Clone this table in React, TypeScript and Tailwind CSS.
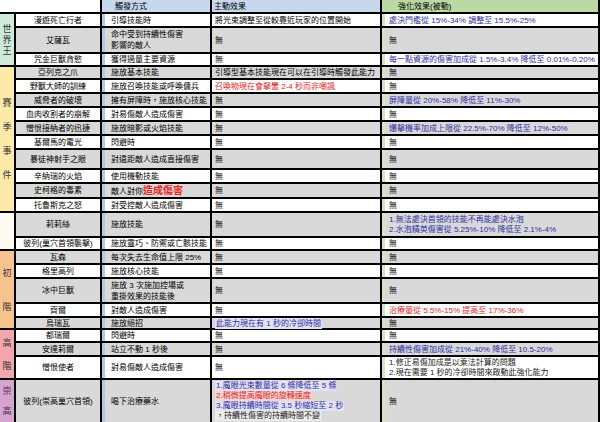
import React from "react";

type Row = {
  name: string;
  trigger: React.ReactNode;
  active?: React.ReactNode;
  passive?: React.ReactNode;
};

const BLUE = "text-[#2f2f9f]";
const RED = "text-[#e02828]";

const rows: Row[] = [
  {
    name: "漫遊死亡行者",
    trigger: "引導技能時",
    active: "將光束調整至從較靠近玩家的位置開始",
    passive: <span className={BLUE}>處決門檻從 15%-34% 調整至 15.5%-25%</span>,
  },
  {
    name: "艾薩瓦",
    trigger: (
      <span>
        命中受到持續性傷害
        <br />
        影響的敵人
      </span>
    ),
  },
  {
    name: "咒金巨獸貪慾",
    trigger: "獲得過量主要資源",
    passive: <span className={BLUE}>每一點資源的傷害加成從 1.5%-3.4% 降低至 0.01%-0.20%</span>,
  },
  { name: "亞列克之爪", trigger: "施放基本技能", active: "引導型基本技能現在可以在引導時觸發此能力" },
  {
    name: "野獸大師的訓練",
    trigger: "施放召喚技能或呼喚傭兵",
    active: <span className={RED}>召喚物現在會擊暈 2-4 秒而非嘲諷</span>,
  },
  {
    name: "威脅者的破壞",
    trigger: "擁有屏障時，施放核心技能",
    passive: <span className={BLUE}>屏障量從 20%-58% 降低至 11%-30%</span>,
  },
  { name: "血肉收割者的崩解", trigger: "對易傷敵人造成傷害" },
  {
    name: "憎恨接納者的迅捷",
    trigger: "施放暗影或火焰技能",
    passive: <span className={BLUE}>爆擊機率加成上限從 22.5%-70% 降低至 12%-50%</span>,
  },
  { name: "基爾馬的電光", trigger: "閃避時" },
  { name: "暴徒神射手之眼", trigger: "對遠距敵人造成直接傷害" },
  { name: "辛納瑞的火焰", trigger: "使用機動技能" },
  {
    name: "史柯格的毒素",
    trigger: (
      <span>
        敵人對你<span className="text-[10px] font-bold text-[#ee1c1c]">造成傷害</span>
      </span>
    ),
  },
  { name: "托魯斯克之怒", trigger: "對受控敵人造成傷害" },
  {
    name: "莉莉絲",
    trigger: "施放技能",
    passive: (
      <span className={`${BLUE} leading-[10px]`}>
        1.無法處決首領的技能不再能處決水泡
        <br />
        2.水泡精英傷害從 5.25%-10% 降低至 2.1%-4%
      </span>
    ),
  },
  { name: "彼列(巢穴首領襲擊)", trigger: "施放靈巧、防禦或亡骸技能" },
  { name: "瓦森", trigger: "每次失去生命值上限 25%" },
  { name: "格里高列", trigger: "施放核心技能" },
  {
    name: "冰中巨獸",
    trigger: (
      <span>
        施放 3 次施加控場或
        <br />
        重掛效果的技能後
      </span>
    ),
  },
  {
    name: "齊爾",
    trigger: "對敵人造成傷害",
    passive: <span className={RED}>治療量從 5.5%-15% 提高至 17%-36%</span>,
  },
  {
    name: "烏瑞瓦",
    trigger: "施放絕招",
    active: <span className={`${BLUE} bg-[#e2e2f4] px-[1px]`}>此能力現在有 1 秒的冷卻時間</span>,
  },
  { name: "都瑞爾", trigger: "閃避時" },
  {
    name: "安達莉爾",
    trigger: "站立不動 1 秒後",
    passive: <span className={BLUE}>持續性傷害加成從 21%-40% 降低至 10.5-20%</span>,
  },
  {
    name: "憎恨使者",
    trigger: "對易傷敵人造成傷害",
    passive: (
      <span className="leading-[10px] text-[#222]">
        1.修正易傷加成是以乘法計算的問題
        <br />
        2.現在需要 1 秒的冷卻時間來啟動此強化能力
      </span>
    ),
  },
  {
    name: "彼列(崇高巢穴首領)",
    trigger: "喝下治療藥水",
    active: (
      <div className="flex flex-col items-start leading-[10px]">
        <span className={`${BLUE} bg-[#e2e2f4] px-[1px]`}>1.魔眼光束數量從 6 條降低至 5 條</span>
        <span className={`${RED} bg-[#f6d4d4] px-[1px]`}>2.稍微提高魔眼的旋轉速度</span>
        <span className={`${BLUE} bg-[#e2e2f4] px-[1px]`}>3.魔眼持續時間從 3.5 秒縮短至 2 秒</span>
        <span className="bg-[#ececec] px-[1px] text-[#222]">，持續性傷害的持續時間不變</span>
      </div>
    ),
  },
];

function Category({ pos, bg, chars, gap }: { pos: string; bg: string; chars: string[]; gap: string }) {
  return (
    <div className={`col-start-1 ${pos} ${bg} flex flex-col items-center justify-center ${gap}`}>
      {chars.map((c, i) => (
        <span key={i} className="text-[9px] leading-[10px] text-[#333]">
          {c}
        </span>
      ))}
    </div>
  );
}

export default function App() {
  return (
    <div
      className="h-[422px] w-[600px] overflow-hidden bg-white"
      style={{ fontFamily: '"Liberation Sans", "Noto Sans CJK TC", sans-serif' }}
    >
      <div className="grid grid-cols-[14px_84px_108px_168px_1fr] grid-rows-[12px_12px_24px_11px_11px_12px_12px_12px_12px_12px_18px_12px_13px_12px_23px_11px_12px_12px_23px_12px_10px_11px_12px_21px_42px] gap-[2px] border-r-2 border-black bg-black text-[8px] leading-[11px] text-black">
        {/* header */}
        <div className="col-span-2 col-start-1 row-start-1 bg-white" />
        <div className="row-start-1 flex items-center bg-[#c6d7ee] pl-[13px]">觸發方式</div>
        <div className="row-start-1 flex items-center bg-[#c6d7ee] pl-[2px]">主動效果</div>
        <div className="row-start-1 flex items-center bg-[#bcd9a3] pl-[16px]">強化效果(被動)</div>

        {/* category strips */}
        <Category pos="row-start-2 row-span-3" bg="bg-[#cdebd9]" chars={["世", "界", "王"]} gap="gap-[1px]" />
        <Category pos="row-start-5 row-span-10" bg="bg-[#fdeaa8]" chars={["賽", "季", "事", "件"]} gap="gap-[14px]" />
        <Category pos="row-start-15 row-span-2" bg="bg-[#fffbf2]" chars={[]} gap="" />
        <Category pos="row-start-17 row-span-5" bg="bg-[#f8c28e]" chars={["初", "階"]} gap="gap-[24px]" />
        <Category pos="row-start-22 row-span-3" bg="bg-[#f2a7ac]" chars={["高", "階"]} gap="gap-[13px]" />
        <Category pos="row-start-25 row-span-1" bg="bg-[#d7a3d0]" chars={["崇", "高"]} gap="gap-[10px]" />

        {rows.map((r, i) => {
          const bg = i % 2 === 0 ? "bg-white" : "bg-[#d9d9d9]";
          return (
            <React.Fragment key={r.name}>
              <div className={`col-start-2 ${bg} flex items-center justify-center whitespace-nowrap`}>{r.name}</div>
              <div className={`${bg} flex items-center whitespace-nowrap border-l-[3px] border-[#b3c8e3] pl-[6px]`}>
                {r.trigger}
              </div>
              <div className={`${bg} flex items-center whitespace-nowrap pl-[3px]`}>{r.active ?? "無"}</div>
              <div
                className={`${bg} flex items-center overflow-hidden whitespace-nowrap border-l-[3px] border-[#d6e4c2] pl-[4px]`}
              >
                {r.passive ?? "無"}
              </div>
            </React.Fragment>
          );
        })}
      </div>
    </div>
  );
}
